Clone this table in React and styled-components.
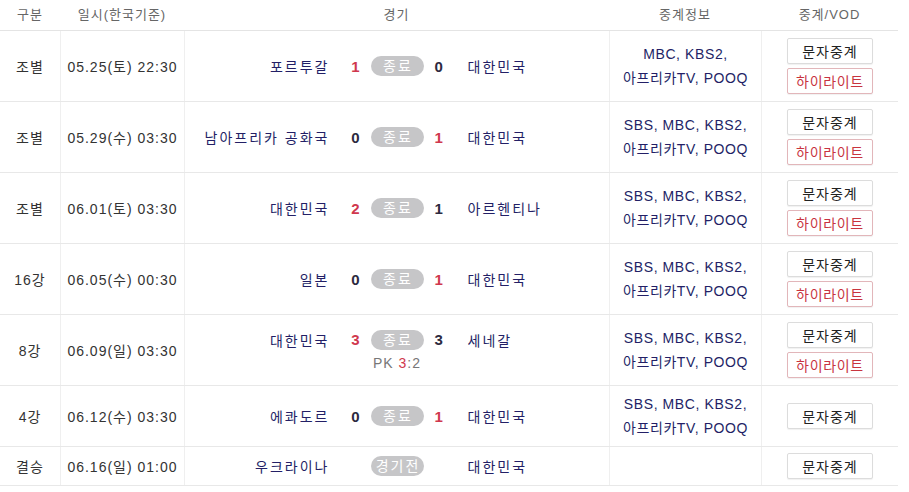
import React from "react"
import styled, { createGlobalStyle } from "styled-components"

const COLS = "60px 124px 425px 152px 137px";

const Global = createGlobalStyle`
  body {
    margin: 0;
    background: #fff;
    font-family: "Liberation Sans", "Noto Sans CJK KR", sans-serif;
    font-size: 14px;
    color: #333;
  }
`;

const Table = styled.div`
  width: 898px;
`;

const HeadRow = styled.div`
  display: grid;
  grid-template-columns: ${COLS};
  height: 30px;
  border-bottom: 1px solid #e4e4e4;
`;

const HeadCell = styled.div`
  display: flex;
  align-items: center;
  justify-content: center;
  font-size: 13px;
  letter-spacing: 1px;
  color: #666;
  padding-bottom: 3px;
`;

const Row = styled.div`
  display: grid;
  grid-template-columns: ${COLS};
  border-bottom: 1px solid #e8e8e8;
`;

const Cell = styled.div`
  display: flex;
  flex-direction: column;
  align-items: center;
  justify-content: center;
  padding: ${p => (p.$tight ? "6px 0" : "7px 0")};
  border-left: ${p => (p.$first ? "none" : "1px solid #efefef")};
  text-align: center;
`;

const Plain = styled.span`
  color: #333;
  letter-spacing: 1px;
`;

const Match = styled.div`
  display: grid;
  grid-template-columns: 1fr 43px 53px 43px 1fr;
  align-items: center;
  width: 100%;
`;

const Team = styled.span`
  color: #231f66;
  letter-spacing: 2px;
  text-align: ${p => (p.$home ? "right" : "left")};
  margin-right: ${p => (p.$home ? "-2px" : "0")};
  padding-left: ${p => (p.$home ? "0" : "1px")};
`;

const Score = styled.span`
  font-weight: bold;
  font-size: 15px;
  color: ${p => (p.$win ? "#d0384e" : "#2d2a40")};
  text-align: ${p => (p.$home ? "right" : "left")};
  padding: ${p => (p.$home ? "0 11px 0 0" : "0 0 0 11px")};
`;

const Badge = styled.span`
  grid-column: 3;
  display: inline-block;
  height: 20px;
  line-height: 20px;
  border-radius: 10px;
  background: #c6c6c8;
  color: #fff;
  font-size: 14px;
  letter-spacing: 2px;
  text-indent: 2px;
`;

const Pk = styled.div`
  margin-top: 5px;
  font-size: 14px;
  letter-spacing: 1px;
  color: #777;
  b {
    color: #d0384e;
    font-weight: normal;
  }
`;

const Broadcast = styled.div`
  color: #231f66;
  line-height: 24px;
  letter-spacing: 0.6px;
`;

const Buttons = styled.div`
  display: flex;
  flex-direction: column;
  gap: 4px;
`;

const Btn = styled.button`
  width: 86px;
  height: 26px;
  padding: 0;
  background: #fff;
  border: 1px solid ${p => (p.$hl ? "#e2b6ba" : "#dcdcdc")};
  border-radius: 2px;
  box-shadow: 0 1px 1px rgba(0, 0, 0, 0.06);
  font-family: inherit;
  font-size: 14px;
  letter-spacing: ${p => (p.$hl ? "0.7px" : "1px")};
  color: ${p => (p.$hl ? "#c8343f" : "#222")};
  cursor: pointer;
`;

const matches = [
  { stage: "조별", date: "05.25(토) 22:30", home: "포르투갈", hs: 1, as: 0, away: "대한민국", tv: ["MBC, KBS2,", "아프리카TV, POOQ"], hl: true },
  { stage: "조별", date: "05.29(수) 03:30", home: "남아프리카 공화국", hs: 0, as: 1, away: "대한민국", tv: ["SBS, MBC, KBS2,", "아프리카TV, POOQ"], hl: true },
  { stage: "조별", date: "06.01(토) 03:30", home: "대한민국", hs: 2, as: 1, away: "아르헨티나", tv: ["SBS, MBC, KBS2,", "아프리카TV, POOQ"], hl: true },
  { stage: "16강", date: "06.05(수) 00:30", home: "일본", hs: 0, as: 1, away: "대한민국", tv: ["SBS, MBC, KBS2,", "아프리카TV, POOQ"], hl: true },
  { stage: "8강", date: "06.09(일) 03:30", home: "대한민국", hs: 3, as: 3, away: "세네갈", pk: [3, 2], tv: ["SBS, MBC, KBS2,", "아프리카TV, POOQ"], hl: true },
  { stage: "4강", date: "06.12(수) 03:30", home: "에콰도르", hs: 0, as: 1, away: "대한민국", tv: ["SBS, MBC, KBS2,", "아프리카TV, POOQ"], hl: false },
  { stage: "결승", date: "06.16(일) 01:00", home: "우크라이나", away: "대한민국", tv: [], hl: false },
];

function Game({ m }) {
  const done = m.hs !== undefined;
  const homeWin = done && (m.pk ? m.pk[0] > m.pk[1] : m.hs > m.as);
  const awayWin = done && (m.pk ? m.pk[1] > m.pk[0] : m.as > m.hs);
  return (
    <>
      <Match>
        <Team $home>{m.home}</Team>
        {done ? <Score $home $win={homeWin}>{m.hs}</Score> : <span />}
        <Badge>{done ? "종료" : "경기전"}</Badge>
        {done ? <Score $win={awayWin}>{m.as}</Score> : <span />}
        <Team>{m.away}</Team>
      </Match>
      {m.pk && (
        <Pk>
          PK <b>{m.pk[0]}</b>:{m.pk[1]}
        </Pk>
      )}
    </>
  );
}

export default function App() {
  return (
    <>
      <Global />
      <Table>
        <HeadRow>
          <HeadCell>구분</HeadCell>
          <HeadCell>일시(한국기준)</HeadCell>
          <HeadCell>경기</HeadCell>
          <HeadCell>중계정보</HeadCell>
          <HeadCell>중계/VOD</HeadCell>
        </HeadRow>
        {matches.map((m, i) => {
          const tight = !m.hl;
          return (
            <Row key={i}>
              <Cell $first $tight={tight}><Plain>{m.stage}</Plain></Cell>
              <Cell $tight={tight}><Plain>{m.date}</Plain></Cell>
              <Cell $tight={tight}><Game m={m} /></Cell>
              <Cell $tight={tight}>
                <Broadcast>
                  {m.tv.map((l, j) => <div key={j}>{l}</div>)}
                </Broadcast>
              </Cell>
              <Cell $tight={tight}>
                <Buttons>
                  <Btn>문자중계</Btn>
                  {m.hl && <Btn $hl>하이라이트</Btn>}
                </Buttons>
              </Cell>
            </Row>
          );
        })}
      </Table>
    </>
  );
}
